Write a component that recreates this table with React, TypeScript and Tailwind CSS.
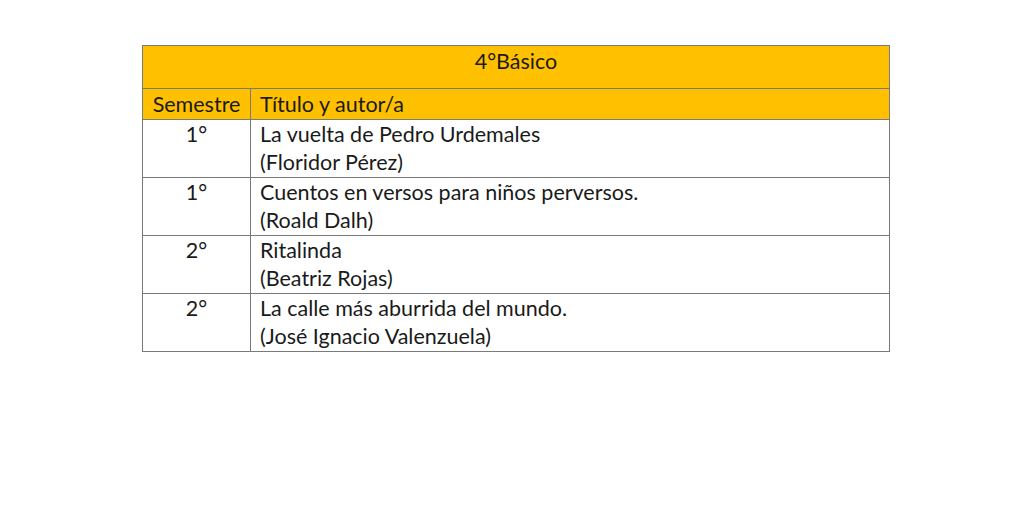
const rows = [
  { sem: '1°', title: 'La vuelta de Pedro Urdemales', author: '(Floridor Pérez)' },
  { sem: '1°', title: 'Cuentos en versos para niños perversos.', author: '(Roald Dalh)' },
  { sem: '2°', title: 'Ritalinda', author: '(Beatriz Rojas)' },
  { sem: '2°', title: 'La calle más aburrida del mundo.', author: '(José Ignacio Valenzuela)' },
];

export default function App() {
  return (
    <div className="w-[1024px] h-[512px] bg-white pt-[45px] pl-[142px] font-['Lato',sans-serif] text-[21.5px] text-[#1a1a1a]">
      <table className="w-[748px] border-collapse">
        <thead>
          <tr className="h-[43px] bg-[#ffc000]">
            <th colSpan={2} className="border border-[#7a7a7a] font-normal text-center align-top leading-[28px] pt-[1px]">
              4°Básico
            </th>
          </tr>
          <tr className="h-[31px] bg-[#ffc000]">
            <th className="w-[108px] border border-[#7a7a7a] font-normal text-center leading-[28px] p-0">Semestre</th>
            <th className="border border-[#7a7a7a] font-normal text-left pl-[9px] leading-[28px] p-0">Título y autor/a</th>
          </tr>
        </thead>
        <tbody>
          {rows.map((r, i) => (
            <tr key={i} className="h-[58px]">
              <td className="border border-[#7a7a7a] text-center align-top leading-[28px] p-0">{r.sem}</td>
              <td className="border border-[#7a7a7a] align-top pl-[9px] leading-[28px] p-0">
                <div>{r.title}</div>
                <div>{r.author}</div>
              </td>
            </tr>
          ))}
        </tbody>
      </table>
    </div>
  );
}
